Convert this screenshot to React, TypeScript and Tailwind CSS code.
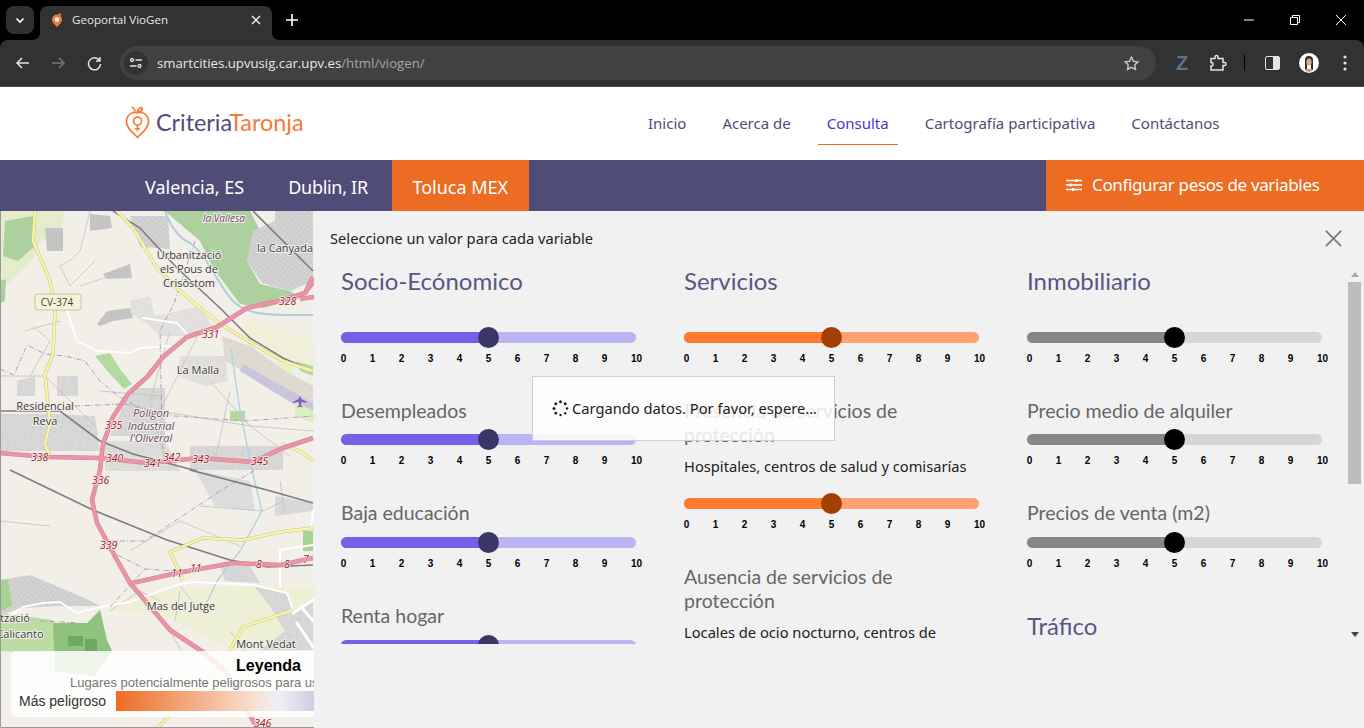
import React from "react";

const Chrome = () => (
  <div className="bg-black">
    <div className="h-10 flex items-end relative font-['Open_Sans',sans-serif]">
      <div className="absolute left-[6px] top-[6px] w-7 h-7 rounded-lg bg-[#2f2f2f] flex items-center justify-center">
        <svg width="12" height="12" viewBox="0 0 12 12" fill="none" stroke="#fff" strokeWidth="1.6"><path d="M2.500 4.500 6 8l3.500-3.500" /></svg>
      </div>
      <div className="relative ml-[40px] w-[232px] h-[34px] bg-[#323232] rounded-t-lg flex items-center pl-[9px] pr-[11px] pb-[6px] text-[11.6px]">
        <svg width="8" height="8" viewBox="0 0 8 8" fill="#323232" className="absolute -left-[8px] bottom-0"><path d="M8 0v8H0c5 0 8-3 8-8Z" /></svg>
        <svg width="8" height="8" viewBox="0 0 8 8" fill="#323232" className="absolute -right-[8px] bottom-0"><path d="M0 0v8h8C3 8 0 5 0 0Z" /></svg>
        <svg width="16" height="16" viewBox="0 0 16 16" fill="none" className="mr-[7px]"><path d="M8 15C5 12 3 10 3 7.500a5 5 0 0 1 10 0C13 10 11 12 8 15Z" fill="#ee7a3b" /><circle cx="8" cy="7.500" r="2.200" fill="#fff" /><path d="M9 3l2-2 1.500 1.500-2 2Z" fill="#ee7a3b" /></svg>
        <span className="flex-1 text-[#e8e8e8]">Geoportal VioGen</span>
        <svg width="10" height="10" viewBox="0 0 10 10" stroke="#e8e8e8" strokeWidth="1.500"><path d="M1 1l8 8M9 1l-8 8" /></svg>
      </div>
      <svg width="12" height="12" viewBox="0 0 12 12" stroke="#fff" strokeWidth="1.600" className="ml-[14px] mb-[14px]"><path d="M6 0v12M0 6h12" /></svg>
      <div className="absolute right-0 top-0 h-10 flex items-center">
        <div className="w-[46px] flex justify-center"><svg width="10" height="10" viewBox="0 0 10 10" stroke="#fff"><path d="M0 5h10" /></svg></div>
        <div className="w-[46px] flex justify-center"><svg width="10" height="10" viewBox="0 0 10 10" stroke="#fff" fill="none"><path d="M.5 2.500h7v7h-7zM2.500 2.500v-2h7v7h-2" /></svg></div>
        <div className="w-[46px] flex justify-center"><svg width="10" height="10" viewBox="0 0 10 10" stroke="#fff"><path d="M0 0l10 10M10 0L0 10" /></svg></div>
      </div>
    </div>
    <div className="h-[47px] bg-[#323232] rounded-t-lg flex items-center border-b border-[#4a4a4a] relative">
      <div className="w-[120px] flex items-center pl-[15px] gap-[21px]">
        <svg width="15" height="14" viewBox="0 0 15 14" fill="none" stroke="#e3e3e3" strokeWidth="1.500"><path d="M14 7H2M7 2 2 7l5 5" /></svg>
        <svg width="15" height="14" viewBox="0 0 15 14" fill="none" stroke="#777" strokeWidth="1.500"><path d="M1 7h12M8 2l5 5-5 5" /></svg>
        <svg width="15" height="15" viewBox="0 0 15 15" fill="none" stroke="#e3e3e3" strokeWidth="1.500"><path d="M12.500 4.500A6 6 0 1 0 13.500 8M13 1v4H9" /></svg>
      </div>
      <div className="w-[1036px] h-[34px] rounded-[17px] bg-[#414141] flex items-center pl-[4px] pr-[16px] font-['Open_Sans',sans-serif] text-[13.2px]">
        <div className="w-6 h-6 rounded-full bg-[#323232] flex items-center justify-center mr-[9px]">
          <svg width="14" height="12" viewBox="0 0 14 12" fill="none" stroke="#e3e3e3" strokeWidth="1.300"><circle cx="3" cy="3" r="1.500" /><path d="M6.500 3H13M1 9h6.500" /><circle cx="10.500" cy="9" r="1.500" /></svg>
        </div>
        <span className="text-[#e8e8e8] pt-[1px]">smartcities.upvusig.car.upv.es</span><span className="text-[#a5a5a5] pt-[1px]">/html/viogen/</span>
        <svg width="17" height="17" viewBox="0 0 24 24" fill="none" stroke="#c7c7c7" strokeWidth="2" className="ml-auto"><path d="m12 3 2.800 5.800 6.200.9-4.500 4.400 1.100 6.300L12 17.400l-5.600 3 1.100-6.300L3 9.700l6.200-.9Z" /></svg>
      </div>
      <div className="flex items-center ml-[18px]">
        <span className="w-[16px] text-center font-['Liberation_Sans',sans-serif] font-bold text-[#5d7288] text-[20px] leading-none">Z</span>
        <svg width="18" height="18" viewBox="0 0 18 18" fill="none" stroke="#e3e3e3" strokeWidth="1.500" className="ml-[19px]"><path d="M2 4.500h4V3a1.500 1.500 0 0 1 3 0v1.500h5v4h1.500a1.500 1.500 0 0 1 0 3H14V16H2v-4h1a2 2 0 0 0 0-3.500H2Z" /></svg>
        <div className="w-px h-[16px] bg-black ml-[17px]" />
        <div className="w-[15px] h-[14px] rounded-[2px] border-[1.500px] border-[#e3e3e3] ml-[20px] flex justify-end"><div className="w-[6px] bg-[#e3e3e3]" /></div>
        <svg width="20" height="20" viewBox="0 0 20 20" className="ml-[19px]">
          <circle cx="10" cy="10" r="10" fill="#fff" />
          <path d="M6 17V7a4 4 0 0 1 8 0v10l-2-1V8H8v8Z" fill="#3d2b25" />
          <ellipse cx="10" cy="9" rx="2.600" ry="3.500" fill="#d9a98e" />
          <path d="M6.500 18c1-3 6-3 7 0a9.500 9.500 0 0 1-7 0Z" fill="#d98a78" />
        </svg>
        <svg width="4" height="16" viewBox="0 0 4 16" fill="#e3e3e3" className="ml-[24px]"><circle cx="2" cy="2" r="1.600" /><circle cx="2" cy="8" r="1.600" /><circle cx="2" cy="14" r="1.600" /></svg>
      </div>
    </div>
  </div>
);

const Logo = () => (
  <div className="flex items-center">
    <svg width="25" height="33" viewBox="0 0 26 34" fill="none" stroke="#f57b36" strokeWidth="1.800">
      <path d="M13 32.500C10 29 1.500 24 1.500 16A10.500 10.500 0 0 1 9 6.300c2.500.7 5 .7 8 0A10.500 10.500 0 0 1 24.500 16C24.500 24 16 29 13 32.500Z" />
      <circle cx="13" cy="15.500" r="4.200" />
      <path d="M13 20v6M10.500 23.500h5" />
      <path d="M13 5.500c.3-2 1-3 4.500-4 1 3-1 5-4.500 4ZM11 5.500C10 3.500 9 2.500 7.500.8" />
    </svg>
    <span className="ml-[6px] text-[23.4px] leading-none font-['Lato',sans-serif] text-[#504c78]">Criteria<span className="text-[#f57b36]">Taronja</span></span>
  </div>
);

const Header = () => (
  <div className="h-[73px] bg-white relative flex items-center pl-[125px] pb-[2px] font-['Noto_Sans',sans-serif] text-[15px] text-[#504c78]">
    <Logo />
    <div className="absolute left-[639px] top-[15px] h-[43px] flex gap-[18px]">
      {["Inicio", "Acerca de", "Consulta", "Cartografía participativa", "Contáctanos"].map((t) => (
        <div key={t} className={"px-[9px] flex items-center h-full " + (t === "Consulta" ? "border-b border-[#ec6c23] text-[#4a35c8]" : "border-b border-transparent")}>{t}</div>
      ))}
    </div>
  </div>
);

const Nav = () => (
  <div className="h-[51px] bg-[#504c78] flex text-white font-['Noto_Sans',sans-serif] text-[18px]">
    <div className="ml-[145px] flex items-center pt-[4px]">Valencia, ES</div>
    <div className="ml-[44px] flex items-center pt-[4px] tracking-[-0.3px]">Dublin, IR</div>
    <div className="ml-[24px] w-[137px] bg-[#ec6c23] flex items-center justify-center pt-[4px]">Toluca MEX</div>
    <div className="ml-auto w-[318px] bg-[#ec6c23] flex items-center pl-[20px] pb-[1px]">
      <svg width="16" height="14" viewBox="0 0 16 14" fill="none" stroke="#fff" strokeWidth="1.500" className="mr-[10px]">
        <path d="M0 2.500h16M0 7h16M0 11.500h16" /><path d="M10.500 1v3M4.500 5.500v3M7 10v3" strokeWidth="2" />
      </svg>
      <span className="text-[17px] tracking-[-0.35px]">Configurar pesos de variables</span>
    </div>
  </div>
);

const motorway = "M313 66 305 82 283 89 247 97 217 116 187 126 163 146 147 166 128 183 113 206 103 233 100 259 92 289 97 312 117 349 130 372 147 392 170 419 203 441 227 462 257 517M0 242 47 246 100 247 147 252 200 247 253 251 283 237 313 227M132 372 177 362 233 352 280 354 313 347M305 82 314 70M300 88 314 86";
const secondary = "M35 0 33 30 50 70 55 100 53 143 45 163 50 213 45 233 50 245M117 0 133 17 157 57 180 80 200 97 220 113 253 133 283 150 313 160M282 233 300 240 313 250M313 317 280 321 243 329 203 327 170 341 177 356 183 369M293 399 243 416 220 456 157 517";

const MapView = () => (
  <svg width="314" height="517" viewBox="0 0 314 517" className="block shrink-0 bg-[#f2efe9]" fontFamily="'Open Sans', sans-serif">
    <defs>
      <pattern id="res" width="7" height="6" patternUnits="userSpaceOnUse" patternTransform="rotate(12)">
        <rect width="7" height="6" fill="#d8d8d8" />
        <path d="M0 0h7M0 0v6" stroke="#c4c4c4" strokeWidth=".6" />
      </pattern>
      <pattern id="dense" width="4" height="4" patternUnits="userSpaceOnUse" patternTransform="rotate(35)">
        <rect width="4" height="4" fill="#d4d4d4" />
        <path d="M0 0h4M0 0v4" stroke="#bcbcbc" strokeWidth=".7" />
      </pattern>
    </defs>
    <path d="M0 0H65L60 25 40 30 33 48 0 80Z" fill="#e4eccb" />
    <path d="M5 10 33 5 35 35 18 50 3 45Z" fill="#add19e" />
    <path d="M0 70 6 68 5 90 0 92Z" fill="#add19e" />
    <path d="M45 17H63V40H47Z" fill="#c4c4c4" />
    <path d="M90 3 110 5 112 17 90 20Z" fill="#c4c4c4" />
    <path d="M103 63 130 53 132 67 107 68Z" fill="#c4c4c4" />
    <path d="M97 113 107 100 130 97 133 107 113 110 100 115Z" fill="#c4c4c4" />
    <path d="M165 0H250L267 33 247 50 260 73 290 80 300 87 263 97 240 93 213 57 200 30Z" fill="#add19e" />
    <path d="M253 20 275 10 275 0H313V70L290 80 262 72 247 50Z" fill="url(#dense)" />
    <path d="M130 5 168 5 170 38 140 36Z" fill="url(#dense)" />
    <path d="M130 90 150 85 155 105 200 95 215 120 190 125 160 125 150 115 132 103Z" fill="url(#res)" opacity=".6" />
    <path d="M240 105 313 130V155L285 145 245 120Z" fill="#f0efd8" />
    <path d="M262 150 295 155 290 170 262 165Z" fill="#e3f5c5" />
    <path d="M295 150 313 155V165L300 160Z" fill="#b7d9a0" />
    <path d="M222 125 250 135 285 160 313 175V200L225 150Z" fill="#dedad2" />
    <path d="M243 153 313 192V205L240 160Z" fill="#c9c6dc" />
    <path d="M295 190 313 200V212L295 205Z" fill="#d9efc0" />
    <path d="M95 145 110 142 120 158 132 173 124 178 110 163Z" fill="#b3d9a0" />
    <path d="M180 145H225L228 170 205 175 178 165Z" fill="url(#res)" opacity=".65" />
    <path d="M137 177H165V225H110L125 190Z" fill="url(#res)" />
    <path d="M17 170 35 165 35 185 17 185ZM57 165H78V185H57Z" fill="url(#res)" />
    <path d="M0 203 55 203 95 205 100 240 0 240Z" fill="url(#res)" />
    <path d="M190 235H283V259H190Z" fill="url(#res)" />
    <path d="M105 230H165L180 260H105Z" fill="url(#res)" opacity=".8" />
    <path d="M230 200h15v10h-15Z" fill="#b7d9a0" />
    <path d="M195 259 250 270 255 300 215 295Z" fill="#dcdcdc" />
    <path d="M275 285 313 292V300L275 305Z" fill="#d8d8d8" />
    <path d="M303 320H313V340H303Z" fill="#a9d394" />
    <path d="M110 399 143 386 173 376 313 376 313 439 233 439 167 406Z" fill="#eef0d5" />
    <path d="M220 355H250L260 372 225 370Z" fill="url(#res)" />
    <path d="M253 374 287 382 295 400 313 390V439L260 439 285 420 270 395Z" fill="url(#res)" />
    <path d="M0 369 30 364 80 385 100 395 60 395 20 397 0 405Z" fill="url(#dense)" />
    <path d="M0 369 8 368 12 395 0 400Z" fill="#a9d394" />
    <path d="M0 402 53 409 60 442 0 440Z" fill="#bcdca4" />
    <path d="M53 412 87 412 100 399 107 429 112 440 95 465 55 460Z" fill="#8fc27d" />
    <path d="M68 425h15v10H68ZM85 428h12v12H85Z" fill="#6fa85f" />
    <path d="M165 0c5 15 15 28 25 32 15 10 25 35 38 52 15 22 40 20 85 20" fill="none" stroke="#a9cfe0" strokeWidth="2" />
    <path d="M231 138 240 200 252 259 262 300 240 340 217 370 205 395" fill="none" stroke="#a9d3e3" strokeWidth="1.300" />
    <g fill="none" stroke="#c3c0ba" strokeWidth=".8">
      <path d="M90 0 80 40 72 48 60 55 70 75 95 50M125 60 80 75M33 115 50 130 30 165M25 120 60 110" />
      <path d="M170 120 150 190 165 250M200 120l-40 80 90 15 40 30M230 180l-15 70M0 165l45 0 50 50M100 180l60 5M210 170l40 45 64 5" />
      <path d="M0 310l50 5M130 340l50-30 60 25M170 420l20 35M230 420l30 40 40-10M180 380l-5 30M180 375 200 400M110 400l30-20 20 10" />
      <path d="M200 295 263 300 283 290M280 270 285 300" />
    </g>
    <g fill="none" stroke="#fff" strokeLinejoin="round" strokeLinecap="round">
      <path d="M67 100 77 130 97 140 130 142 140 137 170 135M143 107 177 112 187 123" strokeWidth="1.800" />
      <path d="M0 412 10 405 23 396 43 392 60 391 77 402 100 396 130 391 177 374 193 371 253 374 287 382 293 399" strokeWidth="1.800" />
      <path d="M280 339 313 334M280 339 280 376" strokeWidth="2" />
      <path d="M293 402 313 389M297 412 313 436M303 398 313 410" strokeWidth="3" />
      <path d="M313 300 311 317" strokeWidth="2" />
    </g>
    <g fill="none" stroke="#b79ab8" strokeWidth="1" strokeDasharray="5 2 1 2">
      <path d="M195 30 175 90 160 120 162 230 165 250" />
      <path d="M0 158 14 164 27 134 45 143 65 145 85 150 100 170 118 185 140 197" />
      <path d="M75 195 125 193 175 205 245 210 314 205" />
      <path d="M100 330 145 330 220 280 255 259M100 335 145 358 175 360" />
      <path d="M110 396 145 358M40 410 80 412" />
    </g>
    <g fill="none" stroke="#7d7d7d" strokeWidth="1.600">
      <path d="M113 0 140 17 177 57 220 97 250 127 283 147 313 160" />
      <path d="M253 0 313 60" />
      <path d="M0 200 60 200 100 230 133 243 197 260" />
      <path d="M10 259 93 299 167 329 230 349 267 356 313 354" />
      <path d="M190 259 267 279 313 292" />
    </g>
    <path d={secondary} fill="none" stroke="#c9c68a" strokeWidth="3.400" strokeLinejoin="round" />
    <path d={secondary} fill="none" stroke="#f7f5a8" strokeWidth="2.400" strokeLinejoin="round" />
    <path d={motorway} fill="none" stroke="#d97f92" strokeWidth="4.600" strokeLinejoin="round" />
    <path d={motorway} fill="none" stroke="#ea94a8" strokeWidth="3.400" strokeLinejoin="round" />
    <g fill="#a3182f" fontStyle="italic" fontSize="10.500" stroke="#f2efe9" strokeWidth="1.500" paintOrder="stroke">
      <text x="279" y="94">328</text><text x="202" y="127">331</text><text x="105" y="218">335</text><text x="31" y="250">338</text><text x="106" y="251">340</text><text x="144" y="256">341</text><text x="163" y="250">342</text><text x="192" y="252">343</text><text x="251" y="254">345</text>
      <text x="92" y="273">336</text><text x="100" y="338">339</text><text x="171" y="366">11</text><text x="190" y="361">11</text><text x="256" y="357">8</text><text x="284" y="357">8</text><text x="303" y="352">7</text><text x="254" y="516">346</text>
    </g>
    <g fill="#3a3a3a" fontSize="11" textAnchor="middle" stroke="#f2efe9" strokeWidth="2" paintOrder="stroke">
      <text x="189" y="48">Urbanització</text><text x="189" y="62">els Pous de</text><text x="189" y="76">Crisòstom</text>
      <text x="285" y="41">la Canyada</text><text x="198" y="163">La Malla</text><text x="45" y="199">Residencial</text><text x="45" y="214">Reva</text>
      <text x="181" y="399">Mas del Jutge</text><text x="266" y="437">Mont Vedat</text><text x="15" y="411">tzació</text><text x="20" y="427">Calicanto</text>
    </g>
    <g fill="#6b4a6e" fontSize="11" fontStyle="italic" textAnchor="middle" stroke="#f2efe9" strokeWidth="2" paintOrder="stroke">
      <text x="151" y="206">Polígon</text><text x="151" y="219">Industrial</text><text x="151" y="231">l'Oliveral</text>
      <text x="224" y="11" fontSize="10">la Vallesa</text>
    </g>
    <rect x="35" y="83" width="46" height="16" rx="2" fill="#f3f3dc" stroke="#c7c79a" />
    <text x="57" y="95" fontSize="10" fill="#45461e" textAnchor="middle">CV-374</text>
    <path d="m300 185 1.500 3 5 2.500v1.500l-5-1-.5 3 1.500 1.500v1l-2.500-.7-2.500.7v-1l1.500-1.500-.5-3-5 1v-1.500l5-2.500Z" fill="#8461c4" />
    <path d="M.5 0V516.500H314" fill="none" stroke="#999" />
  </svg>
);

const Ticks = () => (
  <div className="flex -ml-[12px] mt-[11px] font-['Liberation_Sans',sans-serif] font-bold text-[10px] leading-[10px] text-black">
    {[0, 1, 2, 3, 4, 5, 6, 7, 8, 9, 10].map((n) => (
      <span key={n} className={"shrink-0 text-center " + (n === 10 ? "w-[29px] pl-[6px]" : "w-[29px]")}>{n}</span>
    ))}
  </div>
);

const Slider = ({ left, right, thumb }: { left: string; right: string; thumb: string }) => (
  <div className="w-[295px]">
    <div className={"relative h-[11px] rounded-full " + right}>
      <div className={"h-full w-1/2 rounded-l-full " + left} />
      <div className={"absolute left-[137px] -top-[5px] w-[21px] h-[21px] rounded-full " + thumb} />
    </div>
    <Ticks />
  </div>
);

type Tone = { left: string; right: string; thumb: string };
const purple: Tone = { left: "bg-[#7461e6]", right: "bg-[#bab6f3]", thumb: "bg-[#3a3667]" };
const orange: Tone = { left: "bg-[#ff7a30]", right: "bg-[#ffa271]", thumb: "bg-[#a33f00]" };
const gray: Tone = { left: "bg-[#878787]", right: "bg-[#d6d6d6]", thumb: "bg-black" };

const Title = ({ children }: { children: React.ReactNode }) => (
  <div className="font-['Lato',sans-serif] text-[24px] leading-[28px] text-[#5a5682]">{children}</div>
);
const Sub = ({ children }: { children: React.ReactNode }) => (
  <div className="font-['Lato',sans-serif] text-[19.5px] leading-[24px] text-[#666]">{children}</div>
);

const Panel = () => (
  <div className="flex-1 bg-[#f1f1f1] relative font-['Noto_Sans',sans-serif]">
    <div className="pl-[16px] pt-[17px] text-[14.7px] leading-[20px] text-[#222]">Seleccione un valor para cada variable</div>
    <svg width="17" height="17" viewBox="0 0 18 18" stroke="#777" strokeWidth="1.800" className="absolute left-[1011px] top-[19px]"><path d="M1 1l16 16M17 1 1 17" /></svg>
    <div className="mt-[19px] h-[377px] overflow-hidden flex relative">
      <div className="pl-[27px] w-[370px] shrink-0">
        <Title>Socio-Ecónomico</Title>
        <div className="mt-[37px]"><Slider {...purple} /></div>
        <div className="mt-[35px]"><Sub>Desempleados</Sub></div>
        <div className="mt-[11px]"><Slider {...purple} /></div>
        <div className="mt-[35px]"><Sub>Baja educación</Sub></div>
        <div className="mt-[12px]"><Slider {...purple} /></div>
        <div className="mt-[35px]"><Sub>Renta hogar</Sub></div>
        <div className="mt-[12px]"><Slider {...purple} /></div>
      </div>
      <div className="w-[343px] shrink-0">
        <Title>Servicios</Title>
        <div className="mt-[37px]"><Slider {...orange} /></div>
        <div className="mt-[35px] w-[295px]"><Sub>Presencia de servicios de protección</Sub></div>
        <div className="mt-[9px] text-[14.7px] leading-[20px] text-[#222]">Hospitales, centros de salud y comisarías</div>
        <div className="mt-[22px]"><Slider {...orange} /></div>
        <div className="mt-[35px] w-[295px]"><Sub>Ausencia de servicios de protección</Sub></div>
        <div className="mt-[9px] text-[14.7px] leading-[20px] text-[#222]">Locales de ocio nocturno, centros de</div>
      </div>
      <div className="w-[295px] shrink-0">
        <Title>Inmobiliario</Title>
        <div className="mt-[37px]"><Slider {...gray} /></div>
        <div className="mt-[35px]"><Sub>Precio medio de alquiler</Sub></div>
        <div className="mt-[11px]"><Slider {...gray} /></div>
        <div className="mt-[35px]"><Sub>Precios de venta (m2)</Sub></div>
        <div className="mt-[12px]"><Slider {...gray} /></div>
        <div className="mt-[43px]"><Title>Tráfico</Title></div>
      </div>
      <div className="absolute left-[1033px] top-0 bottom-0 w-[15px] flex flex-col items-center">
        <svg width="8" height="5" viewBox="0 0 8 5" fill="#aaa" className="mt-[5px]"><path d="M4 0l4 5H0Z" /></svg>
        <div className="w-[13px] h-[202px] bg-[#bdbdbd] mt-[5px]" />
        <svg width="8" height="5" viewBox="0 0 8 5" fill="#444" className="mt-auto mb-[7px]"><path d="M4 5 8 0H0Z" /></svg>
      </div>
    </div>
    <div className="absolute left-[218px] top-[165px] w-[303px] h-[65px] bg-white/85 border border-[#cfcfcf] flex items-center pl-[19px] text-[14.7px] text-[#222]">
      <svg width="17" height="17" viewBox="0 0 17 17" fill="#222" className="mr-[3px]">
        <circle cx="8.500" cy="1.800" r="1.500" /><circle cx="13.200" cy="3.800" r="1.500" /><circle cx="15" cy="8.500" r="1.300" /><circle cx="13.200" cy="13.200" r="1.200" /><circle cx="8.500" cy="15" r="1.200" /><circle cx="3.800" cy="13.200" r="1.400" /><circle cx="2" cy="8.500" r="1.500" /><circle cx="3.800" cy="3.800" r="1.500" />
      </svg>
      Cargando datos. Por favor, espere...
    </div>
  </div>
);

const Legend = () => (
  <div className="absolute left-[11px] top-[440px] w-[303px] h-[66px] bg-white/85 rounded-l-[5px] overflow-hidden font-['Liberation_Sans',sans-serif]">
    <div className="absolute right-[13px] top-[6px] text-[16px] font-bold leading-[18px] text-black">Leyenda</div>
    <div className="absolute left-[59px] top-[24px] text-[13px] leading-[16px] text-[#777] whitespace-nowrap">Lugares potencialmente peligrosos para usuarias</div>
    <div className="absolute left-[8px] top-[42px] text-[14px] leading-[17px] text-[#333]">Más peligroso</div>
    <div className="absolute left-[105px] top-[40px] w-[198px] h-[20px] bg-[linear-gradient(to_right,#ee6c22,#f8e0d2_70%,#f0eef5_82%,#cfcde4)]" />
  </div>
);

export default function App() {
  return (
    <div className="w-[1364px] h-[728px] overflow-hidden bg-white relative">
      <Chrome />
      <Header />
      <Nav />
      <div className="flex h-[517px] relative">
        <MapView />
        <Legend />
        <Panel />
      </div>
    </div>
  );
}
